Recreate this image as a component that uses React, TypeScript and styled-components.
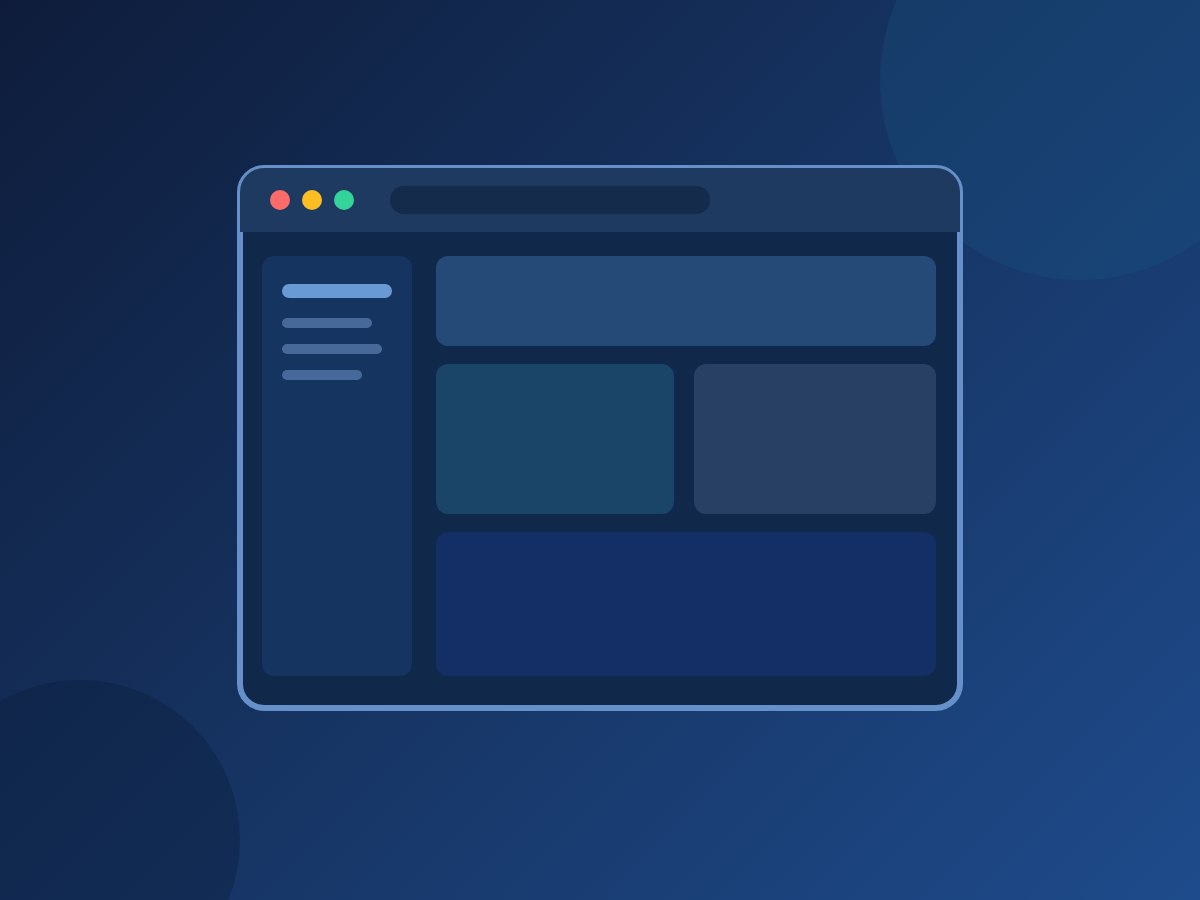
import React from "react";
import styled, { createGlobalStyle } from "styled-components";

const Global = createGlobalStyle`
  html, body { margin: 0; padding: 0; }
  body { font-family: "Inter", "Liberation Sans", sans-serif; }
`;

const Stage = styled.div`
  position: relative;
  width: 1200px;
  height: 900px;
  overflow: hidden;
  background: linear-gradient(135deg, #0e1c3a 0%, #163463 50%, #1e4b8b 100%);
  display: flex;
  flex-direction: column;
  align-items: center;
  padding-top: 165px;
  box-sizing: border-box;
`;

const Blob = styled.div<{ $x: number; $y: number; $r: number; $color: string }>`
  position: absolute;
  left: ${(p) => p.$x - p.$r}px;
  top: ${(p) => p.$y - p.$r}px;
  width: ${(p) => p.$r * 2}px;
  height: ${(p) => p.$r * 2}px;
  border-radius: 50%;
  background: ${(p) => p.$color};
`;

const Window = styled.div`
  position: relative;
  width: 726px;
  height: 546px;
  box-sizing: border-box;
  border: 6px solid #6590c9;
  border-radius: 27px;
  background: #10284a;
  display: flex;
  flex-direction: column;
`;

const Header = styled.div`
  margin: -3px -3px 0;
  height: 64px;
  border-radius: 24px 24px 0 0;
  background: #1f3a60;
  display: flex;
  align-items: center;
  padding-left: 30px;
  gap: 12px;
  flex-shrink: 0;
`;

const Dot = styled.span<{ $color: string }>`
  width: 20px;
  height: 20px;
  border-radius: 50%;
  background: ${(p) => p.$color};
`;

const UrlBar = styled.div`
  margin-left: 24px;
  width: 320px;
  height: 28px;
  border-radius: 14px;
  background: #142b4b;
`;

const Body = styled.div`
  flex: 1;
  display: flex;
  gap: 24px;
  padding: 24px 21px 29px 19px;
`;

const Sidebar = styled.div`
  width: 150px;
  border-radius: 12px;
  background: #15345f;
  padding: 28px 20px;
  box-sizing: border-box;
  display: flex;
  flex-direction: column;
  align-items: flex-start;
`;

const NavBar = styled.div<{ $w: number; $active?: boolean }>`
  width: ${(p) => p.$w}px;
  height: ${(p) => (p.$active ? 14 : 10)}px;
  border-radius: 7px;
  background: ${(p) => (p.$active ? "#6a9ad4" : "#47699a")};
  margin-bottom: ${(p) => (p.$active ? 20 : 16)}px;
`;

const Main = styled.div`
  flex: 1;
  display: flex;
  flex-direction: column;
  gap: 18px;
`;

const Card = styled.div<{ $h: number; $color: string }>`
  height: ${(p) => p.$h}px;
  border-radius: 12px;
  background: ${(p) => p.$color};
`;

const Row = styled.div`
  display: grid;
  grid-template-columns: 238px 242px;
  gap: 20px;
`;

export default function App() {
  return (
    <>
      <Global />
      <Stage>
        <Blob $x={1080} $y={80} $r={200} $color="rgba(24, 84, 132, 0.32)" />
        <Blob $x={80} $y={840} $r={160} $color="rgba(10, 28, 58, 0.38)" />
        <Window>
          <Header>
            <Dot $color="#ff6b6b" />
            <Dot $color="#fbbf24" />
            <Dot $color="#34d399" />
            <UrlBar />
          </Header>
          <Body>
            <Sidebar>
              <NavBar $w={110} $active />
              <NavBar $w={90} />
              <NavBar $w={100} />
              <NavBar $w={80} />
            </Sidebar>
            <Main>
              <Card $h={90} $color="#264a78" />
              <Row>
                <Card $h={150} $color="#1a4569" />
                <Card $h={150} $color="#274063" />
              </Row>
              <Card $h={144} $color="#142e66" />
            </Main>
          </Body>
        </Window>
      </Stage>
    </>
  );
}
